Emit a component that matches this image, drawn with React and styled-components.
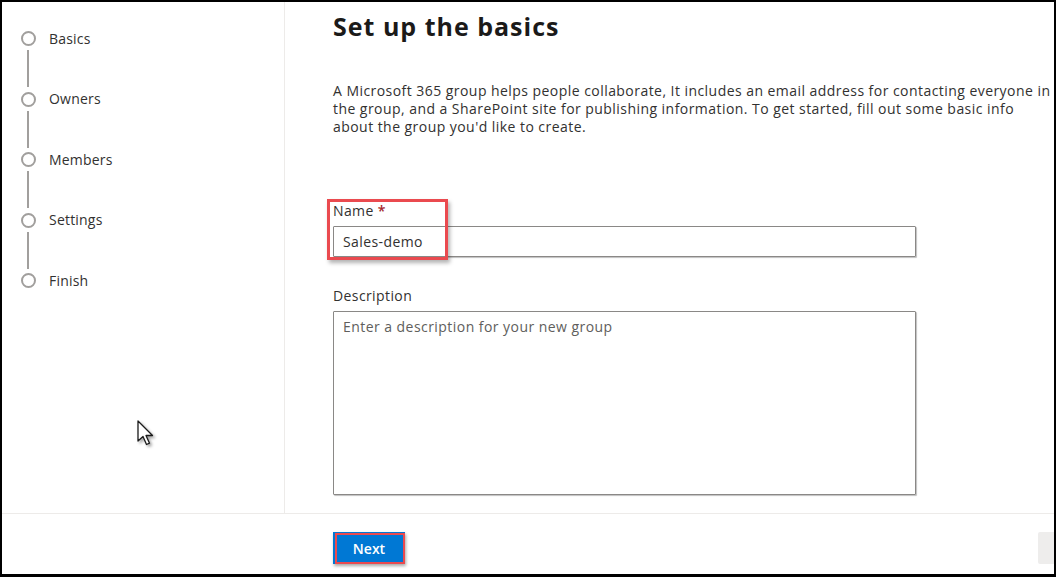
import React from 'react'
import styled, { createGlobalStyle } from 'styled-components'

const GlobalStyle = createGlobalStyle`
  html, body {
    margin: 0;
    padding: 0;
    background: #fff;
  }
  body {
    font-family: "Open Sans", "Noto Sans", "Liberation Sans", sans-serif;
    color: #323130;
  }
`

const steps = ['Basics', 'Owners', 'Members', 'Settings', 'Finish']

export default function App() {
  return (
    <>
      <GlobalStyle />
      <Frame>
        <Body>
          <Sidebar>
            <StepList>
              {steps.map((step, i) => (
                <React.Fragment key={step}>
                  <StepRow>
                    <StepCircle />
                    <StepLabel>{step}</StepLabel>
                  </StepRow>
                  {i < steps.length - 1 && <Connector />}
                </React.Fragment>
              ))}
            </StepList>
            <Cursor width="19" height="27" viewBox="0 0 19 27">
              <path
                d="M2 1 L2 21 L7 16.5 L10.5 24.5 L13.5 23.2 L10 15.5 L16.5 15.5 Z"
                fill="#fff"
                stroke="#1b1b1b"
                strokeWidth="1.3"
                strokeLinejoin="round"
              />
            </Cursor>
          </Sidebar>
          <Main>
            <Title>Set up the basics</Title>
            <Intro>
              A Microsoft 365 group helps people collaborate, It includes an email address for contacting everyone in<br />
              the group, and a SharePoint site for publishing information. To get started, fill out some basic info<br />
              about the group you'd like to create.
            </Intro>
            <Field $top={65.6}>
              <Label>
                Name <Required>*</Required>
              </Label>
              <TextInput readOnly value="Sales-demo" />
              <Highlight />
            </Field>
            <Field $top={30.6}>
              <Label>Description</Label>
              <TextArea readOnly placeholder="Enter a description for your new group" />
            </Field>
          </Main>
        </Body>
        <Footer>
          <PrimaryButton>
            Next
            <ButtonHighlight />
          </PrimaryButton>
          <GhostButton />
        </Footer>
      </Frame>
    </>
  )
}

const Frame = styled.div`
  box-sizing: border-box;
  width: 1056px;
  height: 577px;
  border: 2px solid #000;
  border-bottom-width: 3px;
  display: flex;
  flex-direction: column;
  overflow: hidden;
  background: #fff;
`

const Body = styled.div`
  display: flex;
  height: 511px;
  flex-shrink: 0;
`

const Sidebar = styled.aside`
  position: relative;
  box-sizing: border-box;
  width: 283px;
  flex-shrink: 0;
  border-right: 1px solid #edebe9;
  padding: 29px 0 0 18.5px;
`

const StepList = styled.div`
  display: flex;
  flex-direction: column;
`

const StepRow = styled.div`
  display: flex;
  align-items: center;
  height: 15px;
  gap: 13.5px;
`

const StepCircle = styled.span`
  box-sizing: border-box;
  width: 15px;
  height: 15px;
  border-radius: 50%;
  border: 2px solid #a19f9d;
  flex-shrink: 0;
`

const StepLabel = styled.span`
  font-size: 14px;
  letter-spacing: 0.2px;
  color: #323130;
  line-height: 18px;
  white-space: nowrap;
`

const Connector = styled.span`
  width: 2px;
  height: 37px;
  margin: 4px 0 4.6px 6.5px;
  background: #a19f9d;
`

const Cursor = styled.svg`
  position: absolute;
  left: 134px;
  top: 418px;
  filter: drop-shadow(2px 2px 1.5px rgba(0, 0, 0, 0.35));
`

const Main = styled.main`
  flex: 1;
  min-width: 0;
  padding: 8px 0 0 48px;
  display: flex;
  flex-direction: column;
  align-items: flex-start;
`

const Title = styled.h1`
  margin: 0;
  font-size: 25px;
  line-height: 32px;
  font-weight: 700;
  color: #1b1a19;
  letter-spacing: 1px;
`

const Intro = styled.p`
  margin: 40px 0 0;
  font-size: 14px;
  line-height: 18px;
  letter-spacing: 0.45px;
  color: #323130;
  white-space: nowrap;
`

const Field = styled.div`
  position: relative;
  margin-top: ${p => p.$top}px;
  display: flex;
  flex-direction: column;
  gap: 6px;
`

const Label = styled.label`
  font-size: 14px;
  letter-spacing: 0.4px;
  line-height: 18px;
  color: #323130;
`

const Required = styled.span`
  color: #a4262c;
  font-weight: 600;
`

const TextInput = styled.input`
  box-sizing: border-box;
  width: 583px;
  height: 31px;
  border: 1px solid #8a8886;
  box-shadow: 1px 1px 1px rgba(0, 0, 0, 0.25);
  border-radius: 1px;
  padding: 0 9px;
  font-family: inherit;
  font-size: 14px;
  letter-spacing: 0.4px;
  color: #323130;
  outline: none;
`

const TextArea = styled.textarea`
  box-sizing: border-box;
  width: 583px;
  height: 184px;
  border: 1px solid #8a8886;
  box-shadow: 1px 1px 1px rgba(0, 0, 0, 0.25);
  border-radius: 1px;
  padding: 6px 9px;
  font-family: inherit;
  font-size: 14px;
  letter-spacing: 0.45px;
  line-height: 18px;
  resize: none;
  outline: none;
  &::placeholder {
    color: #605e5c;
  }
`

const Highlight = styled.span`
  position: absolute;
  left: -6px;
  top: -3px;
  width: 121px;
  height: 61px;
  box-sizing: border-box;
  border: 3px solid #ea4a4f;
  box-shadow: 2px 3px 4px rgba(0, 0, 0, 0.3);
  pointer-events: none;
`

const Footer = styled.footer`
  flex: 1;
  border-top: 1px solid #edebe9;
  display: flex;
  align-items: flex-start;
  justify-content: space-between;
  padding: 18px 0 0 331px;
`

const PrimaryButton = styled.button`
  position: relative;
  box-sizing: border-box;
  width: 72px;
  height: 32px;
  border: none;
  background: #0078d4;
  color: #fff;
  font-family: inherit;
  font-size: 14px;
  font-weight: 600;
  box-shadow: 1px 2px 3px rgba(0, 0, 0, 0.35);
`

const ButtonHighlight = styled.span`
  position: absolute;
  inset: 1px 0 0 2px;
  border: 2px solid #ea4a4f;
  pointer-events: none;
`

const GhostButton = styled.div`
  width: 80px;
  height: 32px;
  margin-right: -64px;
  background: #eeedec;
  border-radius: 2px;
`
